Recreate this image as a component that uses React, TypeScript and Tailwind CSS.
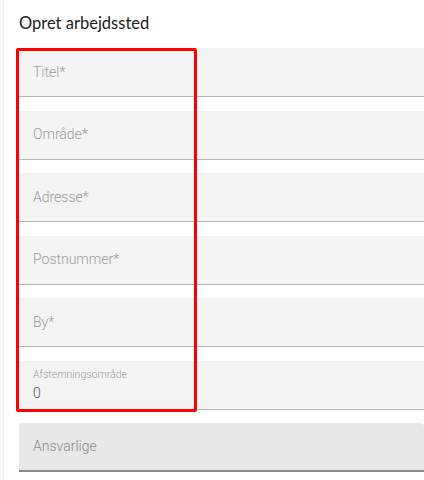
const fields = ["Titel*", "Område*", "Adresse*", "Postnummer*", "By*"];

export default function App() {
  return (
    <div className="relative flex h-[480px] w-[424px] overflow-hidden bg-white font-['Roboto',sans-serif]">
      <div className="w-[4px] shrink-0 border-r border-[#f0f0f0] bg-[#fafafa]" />
      <div className="flex flex-1 flex-col pl-[15px]">
        <h1 className="mt-[13px] h-[35px] font-['Lato',sans-serif] text-[16.5px] font-normal leading-[20px] text-[#222]">
          Opret arbejdssted
        </h1>
        <div className="flex flex-col gap-[13.5px]">
          {fields.map((f) => (
            <div
              key={f}
              className="flex h-[49px] items-center border-b border-[#b5b5b5] bg-[#f4f4f4] pl-[14px] text-[14px] font-light text-[#9a9a9a]"
            >
              {f}
            </div>
          ))}
          <div className="flex h-[49px] flex-col justify-center border-b border-[#b5b5b5] bg-[#f4f4f4] pl-[14px]">
            <span className="text-[10.5px] font-light leading-[13px] text-[#9a9a9a]">Afstemningsområde</span>
            <span className="mt-[4px] text-[14px] font-light leading-[16px] text-[#555]">0</span>
          </div>
          <div className="flex h-[49px] items-center rounded-t-[4px] border-b-2 border-[#8a8a8a] bg-[#e8e8e8] pl-[14px] text-[14px] font-light text-[#888]">
            Ansvarlige
          </div>
        </div>
      </div>
      <div className="absolute left-[16px] top-[48px] h-[364px] w-[181px] rounded-[2px] border-[3px] border-[#ff0000]" />
    </div>
  );
}
